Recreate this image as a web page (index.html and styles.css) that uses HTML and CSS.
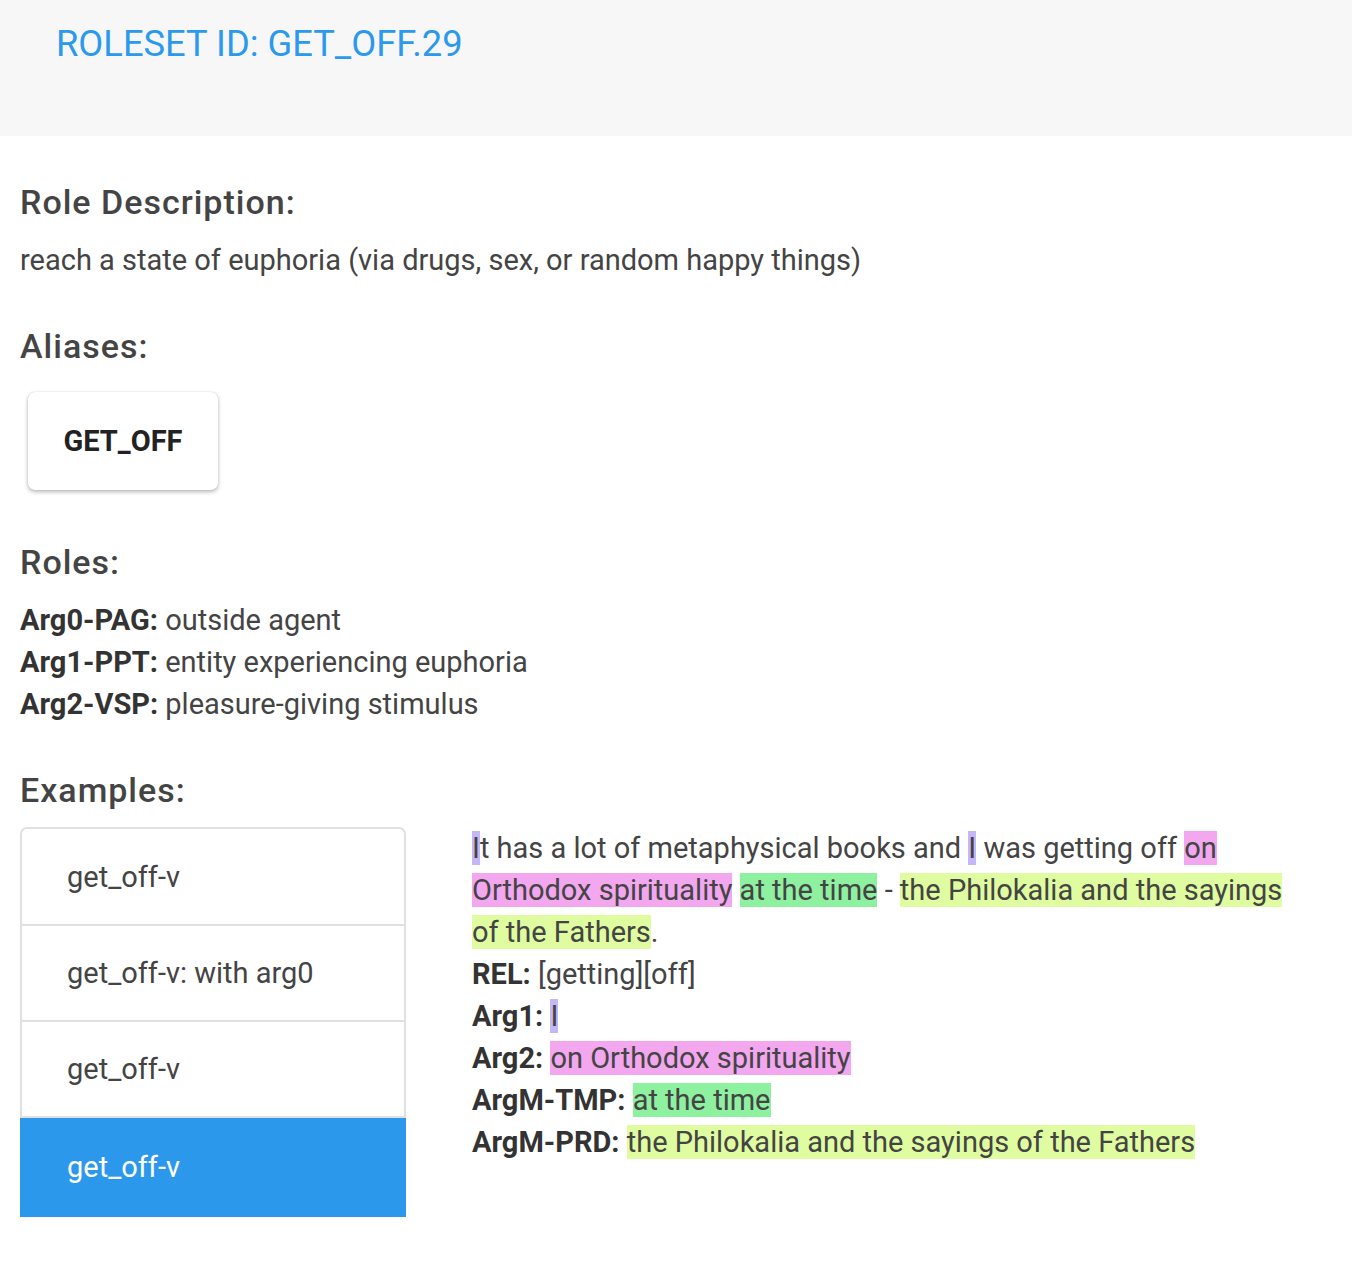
FILE: index.html
```html
<!DOCTYPE html>
<html>
<head>
<meta charset="utf-8">
<link rel="stylesheet" href="styles.css">
</head>
<body>
<header class="top">
  <h1 class="title">ROLESET ID: GET_OFF.29</h1>
</header>
<main class="content">
  <h2 class="sec first">Role Description:</h2>
  <p class="desc">reach a state of euphoria (via drugs, sex, or random happy things)</p>

  <h2 class="sec">Aliases:</h2>
  <div class="chips"><div class="chip">GET_OFF</div></div>

  <h2 class="sec roles-h">Roles:</h2>
  <div class="roles">
    <div><b>Arg0-PAG:</b> outside agent</div>
    <div><b>Arg1-PPT:</b> entity experiencing euphoria</div>
    <div><b>Arg2-VSP:</b> pleasure-giving stimulus</div>
  </div>

  <h2 class="sec">Examples:</h2>
  <div class="examples">
    <ul class="list">
      <li class="item">get_off-v</li>
      <li class="item">get_off-v: with arg0</li>
      <li class="item">get_off-v</li>
      <li class="item active">get_off-v</li>
    </ul>
    <div class="example">
      <p class="sentence"><span class="hl a1">I</span>t has a lot of metaphysical books and <span class="hl a1">I</span> was getting off <span class="hl a2">on Orthodox spirituality</span> <span class="hl tmp">at the time</span> - <span class="hl prd">the Philokalia and the sayings of the Fathers</span>.</p>
      <div class="args">
        <div><b>REL:</b> [getting][off]</div>
        <div><b>Arg1:</b> <span class="hl a1">I</span></div>
        <div><b>Arg2:</b> <span class="hl a2">on Orthodox spirituality</span></div>
        <div><b>ArgM-TMP:</b> <span class="hl tmp">at the time</span></div>
        <div><b>ArgM-PRD:</b> <span class="hl prd">the Philokalia and the sayings of the Fathers</span></div>
      </div>
    </div>
  </div>
</main>
</body>
</html>
```

FILE: styles.css
```css
* { box-sizing: border-box; }
html, body { margin: 0; padding: 0; background: #fff; }
body {
  font-family: Roboto, "Liberation Sans", sans-serif;
  color: #444;
  font-size: 29px;
  line-height: 42px;
}
.top {
  background: #f7f7f7;
  height: 136px;
  padding: 22px 56px 0;
}
.title {
  margin: 0;
  font-size: 36.3px;
  line-height: 44px;
  font-weight: 400;
  color: #2b99ee;
}
.content {
  padding: 0 20px 40px;
}
.sec {
  margin: 45px 0 17px;
  font-size: 34px;
  letter-spacing: 1px;
  line-height: 40px;
  font-weight: 500;
  color: #444;
}
.sec.first { margin-top: 46px; }
.sec.roles-h { margin-top: 52px; }
.desc { margin: 0; }
.chips {
  display: flex;
  padding-left: 8px;
  margin-top: 26px;
}
.chip {
  width: 190px;
  height: 98px;
  display: flex;
  align-items: center;
  justify-content: center;
  background: #fff;
  border-radius: 7px;
  box-shadow: 0 2px 4px rgba(0,0,0,0.28), 0 0 1px rgba(0,0,0,0.2);
  font-weight: 700;
  color: #222;
}
.roles b, .args b { color: #333; font-weight: 700; }
.examples {
  display: flex;
  gap: 66px;
  align-items: flex-start;
}
.list {
  list-style: none;
  margin: 0;
  padding: 0;
  width: 386px;
  flex: none;
  border: 2px solid #e0e0e0;
  border-bottom: none;
  border-radius: 7px 7px 0 0;
}
.item {
  padding: 26px 45px;
  border-bottom: 2px solid #e0e0e0;
  color: #444;
}
.item:first-child { padding-top: 27px; }
.item.active {
  background: #2b98ec;
  color: #fff;
  margin: 0 -2px;
  padding: 28px 47px 29px;
  border-bottom: none;
}
.example {
  width: 828px;
}
.sentence { margin: 0; }
.a1 { background: #c4b7f7; }
.a2 { background: #f2a7ef; }
.tmp { background: #8ef1a0; }
.prd { background: #dffca0; }
```
